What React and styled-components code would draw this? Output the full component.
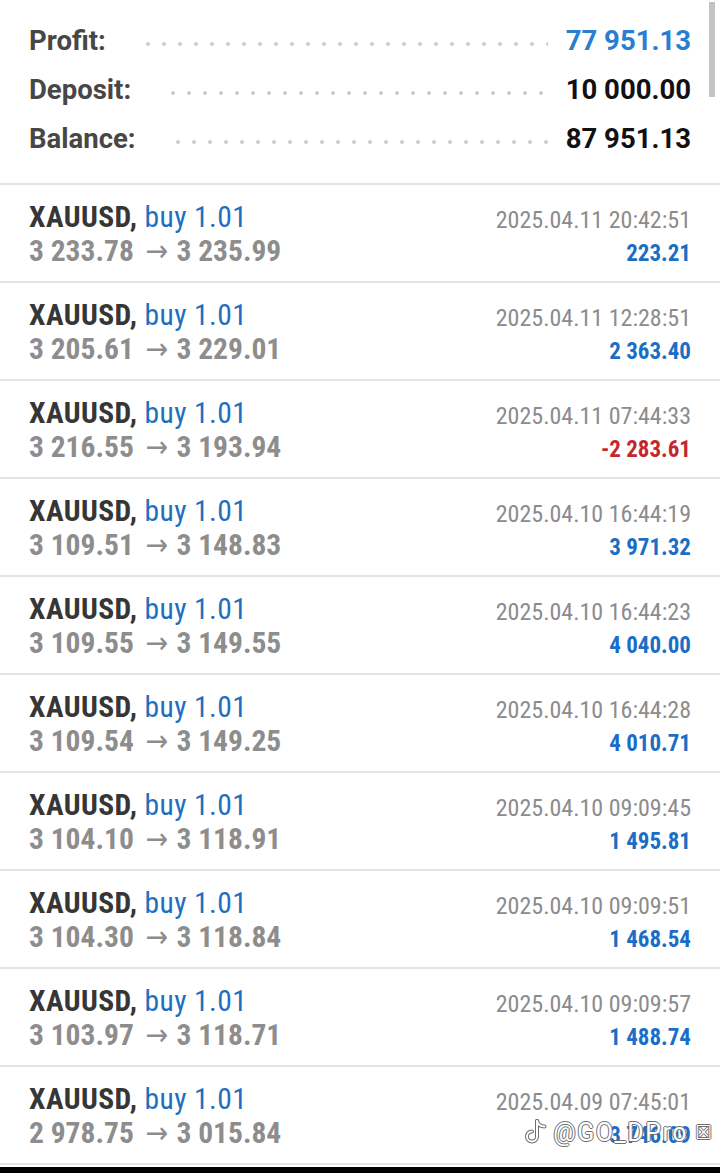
import React from "react";
import styled, { createGlobalStyle } from "styled-components";

const GlobalStyle = createGlobalStyle`
  html, body {
    margin: 0;
    padding: 0;
    background: #ffffff;
    height: 1173px;
    overflow: hidden;
  }
  body {
    font-family: Roboto, "Noto Sans", sans-serif;
    -webkit-font-smoothing: antialiased;
  }
`;

const Page = styled.div`
  position: relative;
  width: 720px;
  height: 1173px;
  display: flex;
  flex-direction: column;
  background: #ffffff;
  overflow: hidden;
`;

const Summary = styled.section`
  padding: 16px 29px 20px;
  border-bottom: 2px solid #e3e3e3;
`;

const SummaryRow = styled.div`
  display: flex;
  height: 49px;
  line-height: 49px;
  font-size: 27.5px;
  font-weight: 700;
  white-space: nowrap;
`;

const Label = styled.span`
  color: #474747;
`;

const Leader = styled.span`
  flex: 1;
  height: 4px;
  margin: 26px 18px 0 40px;
  background-image: radial-gradient(circle at 2px 2px, #cfcfcf 1.6px, transparent 2.2px);
  background-size: 16px 4px;
  background-repeat: repeat-x;
`;

const Value = styled.span`
  color: ${(p) => (p.$accent ? "#2a7dd1" : "#111111")};
`;

const List = styled.div`
  display: flex;
  flex-direction: column;
`;

const TradeRow = styled.div`
  display: flex;
  justify-content: space-between;
  height: 98px;
  box-sizing: border-box;
  padding: 15px 29px 0;
  border-bottom: 2px solid #e3e3e3;
`;

const Left = styled.div`
  display: flex;
  flex-direction: column;
  font-size: 29.5px;
  line-height: 34px;
  font-stretch: 75%;
  white-space: nowrap;
`;

const Title = styled.div`
  color: #363636;
  font-weight: 700;
  letter-spacing: 0.4px;
`;

const Side = styled.span`
  color: #1f6fc0;
  font-weight: 400;
`;

const Prices = styled.div`
  color: #8d8d8d;
  font-weight: 700;
`;

const Arrow = styled.span`
  font-family: "DejaVu Sans", sans-serif;
  font-weight: 400;
  font-size: 30px;
  margin: 0 8px 0 12px;
  color: #8d8d8d;
`;

const Right = styled.div`
  display: flex;
  flex-direction: column;
  align-items: flex-end;
  margin-top: 3px;
  line-height: 34px;
  font-stretch: 75%;
  white-space: nowrap;
`;

const Time = styled.div`
  font-size: 24px;
  color: #8c8c8c;
  font-weight: 400;
`;

const Profit = styled.div`
  font-size: 23px;
  font-weight: 700;
  color: ${(p) => (p.$loss ? "#c4282e" : "#1b6ec6")};
`;

const Footer = styled.div`
  margin-top: auto;
  height: 6px;
  background: #000000;
`;

const Scrollbar = styled.div`
  position: absolute;
  top: 2px;
  right: 5px;
  width: 6px;
  height: 95px;
  background: #c3c3c3;
`;

const Watermark = styled.div`
  position: absolute;
  right: 8px;
  top: 1118px;
  display: flex;
  align-items: center;
  gap: 6px;
  height: 28px;
  color: #ffffff;
  font-family: Roboto, sans-serif;
  font-size: 25px;
  letter-spacing: 1.5px;
  text-shadow: 1px 0 0 #6e6e6e, -1px 0 0 #6e6e6e, 0 1px 0 #6e6e6e, 0 -1px 0 #6e6e6e;
`;

const Box = styled.span`
  font-family: "DejaVu Sans", sans-serif;
  font-size: 19px;
  color: #ffffff;
  letter-spacing: 0;
  margin-left: 1px;
`;

const summary = [
  { label: "Profit:", value: "77 951.13", accent: true },
  { label: "Deposit:", value: "10 000.00" },
  { label: "Balance:", value: "87 951.13" },
];

const trades = [
  ["2025.04.11 20:42:51", "3 233.78", "3 235.99", "223.21"],
  ["2025.04.11 12:28:51", "3 205.61", "3 229.01", "2 363.40"],
  ["2025.04.11 07:44:33", "3 216.55", "3 193.94", "-2 283.61"],
  ["2025.04.10 16:44:19", "3 109.51", "3 148.83", "3 971.32"],
  ["2025.04.10 16:44:23", "3 109.55", "3 149.55", "4 040.00"],
  ["2025.04.10 16:44:28", "3 109.54", "3 149.25", "4 010.71"],
  ["2025.04.10 09:09:45", "3 104.10", "3 118.91", "1 495.81"],
  ["2025.04.10 09:09:51", "3 104.30", "3 118.84", "1 468.54"],
  ["2025.04.10 09:09:57", "3 103.97", "3 118.71", "1 488.74"],
  ["2025.04.09 07:45:01", "2 978.75", "3 015.84", "3 746.09"],
];

function NoteLogo() {
  return (
    <svg width="22" height="28" viewBox="0 0 22 28" fill="none">
      <g stroke="#6e6e6e" strokeWidth="4" strokeLinecap="round" strokeLinejoin="round">
        <path d="M12 3 V18.5 a5 5 0 1 1 -5 -5" />
        <path d="M12 3 c1 3.5 4 5.5 7.5 5.5" />
      </g>
      <g stroke="#ffffff" strokeWidth="2" strokeLinecap="round" strokeLinejoin="round">
        <path d="M12 3 V18.5 a5 5 0 1 1 -5 -5" />
        <path d="M12 3 c1 3.5 4 5.5 7.5 5.5" />
      </g>
    </svg>
  );
}

export default function App() {
  return (
    <>
      <GlobalStyle />
      <Page>
        <Summary>
          {summary.map((s) => (
            <SummaryRow key={s.label}>
              <Label>{s.label}</Label>
              <Leader />
              <Value $accent={s.accent}>{s.value}</Value>
            </SummaryRow>
          ))}
        </Summary>
        <List>
          {trades.map(([time, open, close, profit]) => (
            <TradeRow key={time}>
              <Left>
                <Title>
                  XAUUSD, <Side>buy 1.01</Side>
                </Title>
                <Prices>
                  {open}
                  <Arrow>→</Arrow>
                  {close}
                </Prices>
              </Left>
              <Right>
                <Time>{time}</Time>
                <Profit $loss={profit.startsWith("-")}>{profit}</Profit>
              </Right>
            </TradeRow>
          ))}
        </List>
        <Footer />
        <Scrollbar />
        <Watermark>
          <NoteLogo />
          <span>@GO_DPro</span>
          <Box>☒</Box>
        </Watermark>
      </Page>
    </>
  );
}
